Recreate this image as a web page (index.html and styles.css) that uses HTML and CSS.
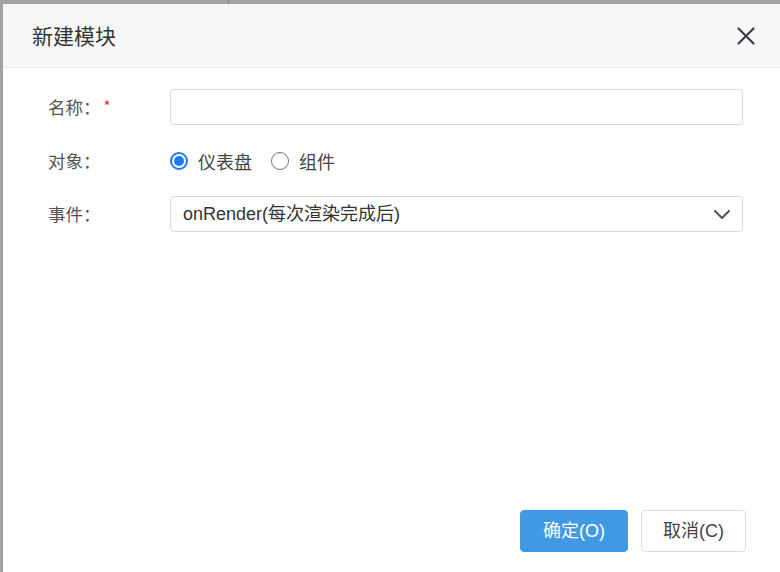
FILE: index.html
```html
<!DOCTYPE html>
<html lang="zh-CN">
<head>
<meta charset="utf-8">
<title>新建模块</title>
<link rel="stylesheet" href="styles.css">
</head>
<body>
<div class="backdrop">
  <div class="dialog">
    <div class="dialog-header">
      <div class="dialog-title">新建模块</div>
      <button class="close-btn" aria-label="关闭">
        <svg width="18" height="18" viewBox="0 0 18 18"><path d="M1.5 1.5 L16.5 16.5 M16.5 1.5 L1.5 16.5" stroke="#3c3c48" stroke-width="2.2" fill="none" stroke-linecap="round"/></svg>
      </button>
    </div>
    <div class="dialog-body">
      <div class="form-row">
        <label class="form-label">名称：<span class="required">*</span></label>
        <div class="form-control"><input class="text-input" type="text"></div>
      </div>
      <div class="form-row">
        <label class="form-label">对象：</label>
        <div class="form-control radios">
          <span class="radio checked"></span><span class="radio-text">仪表盘</span>
          <span class="radio"></span><span class="radio-text">组件</span>
        </div>
      </div>
      <div class="form-row">
        <label class="form-label">事件：</label>
        <div class="form-control">
          <div class="select">
            <span class="select-value">onRender(每次渲染完成后)</span>
            <svg class="chevron" width="16" height="9" viewBox="0 0 16 9"><path d="M1 1 L8 8 L15 1" stroke="#555" stroke-width="2" fill="none" stroke-linejoin="round" stroke-linecap="round"/></svg>
          </div>
        </div>
      </div>
    </div>
    <div class="dialog-footer">
      <button class="btn btn-primary">确定(O)</button>
      <button class="btn btn-default">取消(C)</button>
    </div>
  </div>
</div>
</body>
</html>
```
FILE: styles.css
```css
html, body {
  margin: 0;
  padding: 0;
  height: 100%;
  overflow: hidden;
}
body {
  background: #a3a3a3;
  font-family: "Liberation Sans", "Noto Sans CJK SC", sans-serif;
}
.backdrop {
  height: 100%;
  padding: 4px 0 0 3px;
  box-sizing: border-box;
  background: linear-gradient(to right, transparent 228px, #7d7d7d 228px, #7d7d7d 229px, transparent 229px) top left / 100% 4px no-repeat;
}
.dialog {
  width: 777px;
  height: 568px;
  background: #fff;
  display: flex;
  flex-direction: column;
}
.dialog-header {
  height: 63px;
  background: #f7f7f7;
  border-bottom: 1px solid #e6e6e6;
  display: flex;
  align-items: center;
  justify-content: space-between;
  padding: 0 25px 0 29px;
  flex-shrink: 0;
}
.dialog-title {
  font-size: 21px;
  color: #333;
  line-height: 1;
  font-family: "Noto Sans CJK SC", sans-serif;
}
.close-btn {
  border: 0;
  background: transparent;
  padding: 0;
  width: 18px;
  height: 18px;
  display: flex;
  cursor: pointer;
}
.dialog-body {
  flex: 1;
  padding: 21px 37px 0 45px;
  display: flex;
  flex-direction: column;
  gap: 17.5px;
}
.form-row {
  display: flex;
  align-items: center;
  height: 36px;
}
.form-label {
  width: 122px;
  flex-shrink: 0;
  font-size: 17.5px;
  color: #555;
  line-height: 1;
  font-family: "Noto Sans CJK SC", sans-serif;
}
.required {
  color: #e8282b;
  font-size: 15px;
  margin-left: 3px;
  position: relative;
  top: -2px;
}
.form-control {
  flex: 1;
  height: 100%;
}
.text-input {
  width: 100%;
  height: 100%;
  box-sizing: border-box;
  border: 1px solid #dadada;
  border-radius: 4px;
  outline: none;
  padding: 0 12px;
  font-size: 17px;
}
.radios {
  display: flex;
  align-items: center;
}
.radio {
  width: 18px;
  height: 18px;
  box-sizing: border-box;
  border-radius: 50%;
  border: 1.5px solid #767676;
  flex-shrink: 0;
  position: relative;
}
.radio.checked {
  border: 2px solid #1a7cf2;
}
.radio.checked::after {
  content: "";
  position: absolute;
  left: 2px;
  top: 2px;
  width: 10px;
  height: 10px;
  border-radius: 50%;
  background: #1a7cf2;
}
.radio-text {
  font-size: 18px;
  color: #444;
  margin-left: 10px;
  margin-right: 19px;
  line-height: 1;
  font-family: "Noto Sans CJK SC", sans-serif;
}
.select {
  height: 100%;
  box-sizing: border-box;
  border: 1px solid #dadada;
  border-radius: 4px;
  display: flex;
  align-items: center;
  justify-content: space-between;
  padding: 0 12px 0 12px;
}
.select-value {
  font-size: 18px;
  color: #333;
  line-height: 1;
}
.chevron {
  display: block;
}
.dialog-footer {
  display: flex;
  justify-content: flex-end;
  gap: 13px;
  padding: 0 34px 20px 0;
}
.btn {
  height: 42px;
  border-radius: 4px;
  font-size: 18px;
  font-family: "Liberation Sans", "Noto Sans CJK SC", sans-serif;
  line-height: 1;
  cursor: pointer;
  padding: 0;
}
.btn-primary {
  width: 108px;
  background: #4299e3;
  border: 1px solid #4299e3;
  color: #fff;
}
.btn-default {
  width: 105px;
  background: #fff;
  border: 1px solid #dedede;
  color: #444;
}
```
